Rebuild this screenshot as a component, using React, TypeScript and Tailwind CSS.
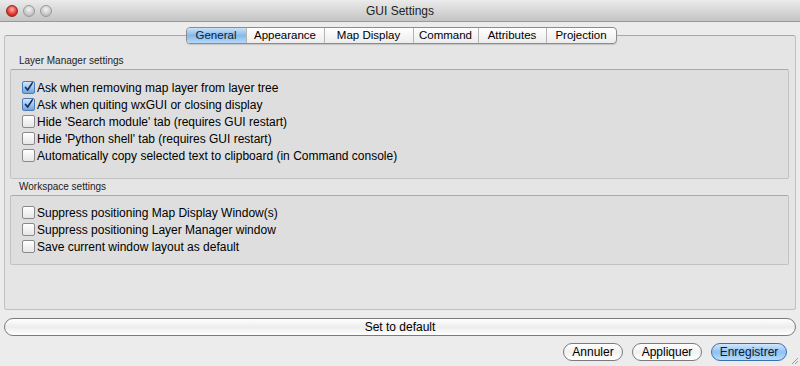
import React from "react"

const font = { fontFamily: '"Liberation Sans", Arial, sans-serif' }

const tabs = [
    { t: "General", w: "w-[59px]" },
    { t: "Appearance", w: "w-[78px]" },
    { t: "Map Display", w: "w-[89px]" },
    { t: "Command", w: "w-[65px]" },
    { t: "Attributes", w: "w-[68px]" },
    { t: "Projection", w: "w-[70px]" },
]

const Row = ({ label, checked = false }: { label: string; checked?: boolean }) => (
    <div className="flex items-center gap-[2px] h-[17px]">
        {checked ? (
            <span className="w-[13px] h-[13px] rounded-[2px] border border-[#4a7ab8] bg-gradient-to-b from-[#d3e6fa] to-[#6fa5df] flex items-center justify-center shrink-0">
                <svg width="13" height="13" viewBox="0 0 13 13">
                    <path d="M3 6.5 L5.5 9.5 L11 1" fill="none" stroke="#16305c" strokeWidth="2" strokeLinecap="round" strokeLinejoin="round" />
                </svg>
            </span>
        ) : (
            <span className="w-[13px] h-[13px] rounded-[2px] border border-[#8a8a8a] bg-gradient-to-b from-white to-[#e6e6e6] shrink-0" />
        )}
        <span className="text-[12px] text-black">{label}</span>
    </div>
)

const Group = ({ title, pad, children }: { title: string; pad: string; children: React.ReactNode }) => (
    <div className="flex flex-col">
        <div className="text-[10px] text-[#222] pl-[9px] h-[16px] leading-[15px]">{title}</div>
        <div className={`border border-[#c2c2c2] border-t-[#a9a9a9] rounded-[2px] bg-[#dedede] pl-[11px] ${pad} flex flex-col`}>
            {children}
        </div>
    </div>
)

const Pill = ({ label, blue = false, w }: { label: string; blue?: boolean; w: string }) => (
    <button
        className={`${w} h-[18px] rounded-full border text-[12px] leading-[16px] text-center ${
            blue
                ? "border-[#3d6fb0] bg-gradient-to-b from-[#d3e7fb] via-[#8fc1f2] to-[#b8dbfb] text-[#0a1a33]"
                : "border-[#7b7b7b] bg-gradient-to-b from-white via-[#f1f1f1] to-white text-black"
        }`}
    >
        {label}
    </button>
)

export default function App() {
    return (
        <div style={font} className="w-[800px] h-[366px] bg-[#ececec] flex flex-col overflow-hidden relative">
            {/* title bar */}
            <div className="h-[22px] bg-gradient-to-b from-[#ebebeb] to-[#c4c4c4] border-b border-[#999] flex items-center relative shrink-0">
                <div className="flex gap-[5px] pl-[6px]">
                    <span className="w-[12px] h-[12px] rounded-full bg-[radial-gradient(circle_at_50%_35%,#ffb3a8,#e0332a_60%,#9c1b13)] border border-[#8b2a22]" />
                    <span className="w-[12px] h-[12px] rounded-full bg-[radial-gradient(circle_at_50%_35%,#f4f4f4,#c8c8c8_60%,#a7a7a7)] border border-[#9a9a9a]" />
                    <span className="w-[12px] h-[12px] rounded-full bg-[radial-gradient(circle_at_50%_35%,#f4f4f4,#c8c8c8_60%,#a7a7a7)] border border-[#9a9a9a]" />
                </div>
                <div className="absolute inset-0 flex items-center justify-center text-[12px] text-[#222]">GUI Settings</div>
            </div>

            {/* tab panel */}
            <div className="flex flex-col px-[4px] pt-[5px] shrink-0">
                <div className="flex justify-center h-[17px] relative z-10 pl-[2px]">
                    <div className="flex rounded-[4px] border border-[#8c8c8c] overflow-hidden bg-gradient-to-b from-white to-[#ececec] shadow-[0_1px_1px_rgba(0,0,0,0.15)]">
                        {tabs.map(({ t, w }, i) => (
                            <div
                                key={t}
                                className={`${w} text-center h-[15px] leading-[15px] text-[11.5px] ${
                                    i === 0
                                        ? "bg-gradient-to-b from-[#cbe2f8] via-[#86b9ea] to-[#b6d8f8] text-[#0c1e3a]"
                                        : "text-black border-l border-[#b5b5b5]"
                                }`}
                            >
                                {t}
                            </div>
                        ))}
                    </div>
                </div>
                <div className="-mt-[9px] h-[275px] border border-[#c0c0c0] border-t-[#a8a8a8] rounded-[3px] bg-[#e5e5e5] pl-[5px] pr-[6px] pt-[17px] flex flex-col">
                    <Group title="Layer Manager settings" pad="pt-[9px] pb-[14px]">
                        <Row checked label="Ask when removing map layer from layer tree" />
                        <Row checked label="Ask when quiting wxGUI or closing display" />
                        <Row label="Hide 'Search module' tab (requires GUI restart)" />
                        <Row label="Hide 'Python shell' tab (requires GUI restart)" />
                        <Row label="Automatically copy selected text to clipboard (in Command console)" />
                    </Group>
                    <Group title="Workspace settings" pad="pt-[8px] pb-[9px]">
                        <Row label="Suppress positioning Map Display Window(s)" />
                        <Row label="Suppress positioning Layer Manager window" />
                        <Row label="Save current window layout as default" />
                    </Group>
                </div>
            </div>

            {/* set to default */}
            <div className="flex px-[4px] pt-[8px] shrink-0">
                <button className="w-full h-[18px] rounded-full border border-[#7b7b7b] bg-gradient-to-b from-white via-[#ededed] to-white text-[12px] leading-[16px] text-black">
                    Set to default
                </button>
            </div>

            {/* bottom buttons */}
            <div className="flex justify-end gap-[9px] pr-[13px] pt-[7px] shrink-0">
                <Pill w="w-[60px]" label="Annuler" />
                <Pill w="w-[70px]" label="Appliquer" />
                <Pill w="w-[76px]" label="Enregistrer" blue />
            </div>

            {/* resize grip */}
            <svg className="absolute right-[1px] bottom-[1px]" width="10" height="10" viewBox="0 0 10 10">
                <path d="M9 3 L3 9 M9 6 L6 9" stroke="#9a9a9a" strokeWidth="1" />
            </svg>
        </div>
    )
}
